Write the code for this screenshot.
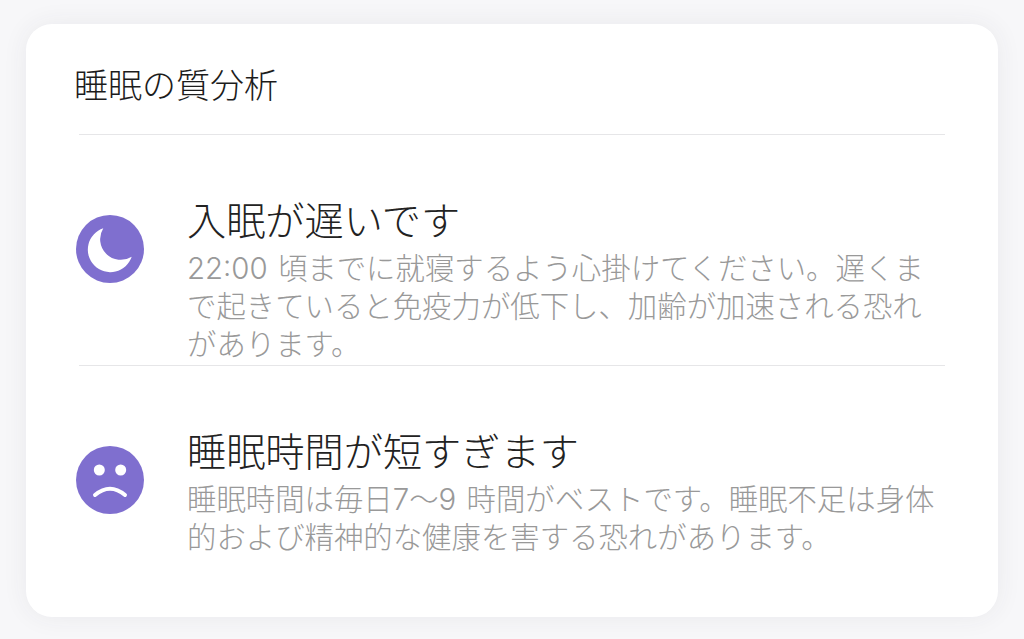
<script>
</script>

<div class="page">
  <section class="card">
    <h2 class="title">睡眠の質分析</h2>
    <div class="rule"></div>
    <div class="row">
      <div class="icon">
        <svg viewBox="0 0 68 68" width="68" height="68">
          <circle cx="34" cy="34" r="34" fill="#7f6fcf" />
          <path d="M27.3 13.3 A22.5 22.5 0 1 0 55.7 41.7 A20.6 20.6 0 0 1 27.3 13.3 Z" fill="#fff" />
        </svg>
      </div>
      <div class="text">
        <h3>入眠が遅いです</h3>
        <p>22:00 頃までに就寝するよう心掛けてください。遅くまで起きていると免疫力が低下し、加齢が加速される恐れがあります。</p>
      </div>
    </div>
    <div class="rule"></div>
    <div class="row">
      <div class="icon">
        <svg viewBox="0 0 68 68" width="68" height="68">
          <circle cx="34" cy="34" r="34" fill="#7f6fcf" />
          <circle cx="23.3" cy="24" r="5.5" fill="#fff" />
          <circle cx="44.7" cy="24" r="5.5" fill="#fff" />
          <path d="M19 49 Q34 36.5 49 49" fill="none" stroke="#fff" stroke-width="4" stroke-linecap="round" />
        </svg>
      </div>
      <div class="text">
        <h3>睡眠時間が短すぎます</h3>
        <p>睡眠時間は毎日7〜9 時間がベストです。睡眠不足は身体的および精神的な健康を害する恐れがあります。</p>
      </div>
    </div>
  </section>
</div>

<style>
  :global(body) {
    margin: 0;
    background: #f7f7f9;
    font-family: "Inter", "Noto Sans CJK JP", sans-serif;
  }
  .page {
    width: 1024px;
    height: 639px;
    box-sizing: border-box;
    padding: 24px 26px 22px;
    overflow: hidden;
  }
  .card {
    background: #fff;
    border-radius: 26px;
    height: 593px;
    box-sizing: border-box;
    padding: 0 53px 0 50px;
    box-shadow: 0 0 26px rgba(50, 50, 70, 0.07);
  }
  .title {
    margin: 0 0 0 -2px;
    padding: 41px 0 0;
    height: 110px;
    box-sizing: border-box;
    font-size: 34px;
    line-height: 42px;
    font-weight: 300;
    color: #1c1c1c;
  }
  .rule {
    height: 1px;
    background: #e6e6e8;
    margin-left: 3px;
  }
  .row {
    display: flex;
    align-items: flex-start;
    gap: 43px;
    height: 230px;
  }
  .icon {
    width: 68px;
    height: 68px;
    flex: none;
    margin-top: 80px;
  }
  .text {
    flex: 1;
    padding-top: 61px;
  }
  h3 {
    margin: 0;
    font-size: 39.2px;
    line-height: 50px;
    font-weight: 300;
    color: #222;
  }
  p {
    margin: 4px 0 0;
    font-size: 29.4px;
    word-spacing: 2px;
    line-height: 38px;
    font-weight: 300;
    color: #999;
  }
</style>
